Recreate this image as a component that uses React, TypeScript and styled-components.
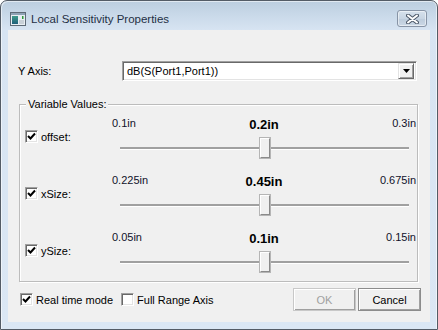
import React from "react";
import styled, { createGlobalStyle } from "styled-components";

const GlobalStyle = createGlobalStyle`
  html, body { margin: 0; padding: 0; background: #fff; }
  body {
    font-family: "Liberation Sans", Arial, sans-serif;
    font-size: 11px;
    color: #000;
  }
  * { box-sizing: border-box; }
`;

type Variable = {
  name: string;
  min: string;
  max: string;
  value: string;
  fraction: number;
};

const variables: Variable[] = [
  { name: "offset:", min: "0.1in", max: "0.3in", value: "0.2in", fraction: 0.5 },
  { name: "xSize:", min: "0.225in", max: "0.675in", value: "0.45in", fraction: 0.5 },
  { name: "ySize:", min: "0.05in", max: "0.15in", value: "0.1in", fraction: 0.5 },
];

const Window = styled.div`
  width: 438px;
  height: 330px;
  border: 1px solid #545c66;
  border-radius: 7px 7px 0 0;
  background: linear-gradient(#bccedf 0px, #c9d9e9 14px, #d7e4f2 29px, #dbe7f4 100%);
  box-shadow: inset 1px 1px 0 rgba(255, 255, 255, 0.55), inset -1px 0 0 rgba(255, 255, 255, 0.55);
  display: flex;
  flex-direction: column;
  overflow: hidden;
`;

const TitleBar = styled.div`
  height: 29px;
  flex-shrink: 0;
  display: flex;
  align-items: center;
  padding: 6px 10px 0 9px;
`;

const TitleText = styled.div`
  flex: 1;
  margin-left: 5px;
  font-size: 11.5px;
  color: #1f2f44;
  white-space: nowrap;
`;

const CloseButton = styled.div`
  align-self: flex-start;
  margin-top: 3px;
  width: 30px;
  height: 17px;
  border: 1px solid #8794a6;
  border-radius: 3px;
  background: linear-gradient(#d6e1ec, #c8d5e3 50%, #bccbdb 51%, #cbd8e6);
  box-shadow: inset 0 0 0 1px rgba(255, 255, 255, 0.5);
  display: flex;
  align-items: center;
  justify-content: center;
`;

const Client = styled.div`
  flex: 1;
  margin: 0 7px 7px 7px;
  background: #f0f0f0;
  display: flex;
  flex-direction: column;
  padding: 31px 9px 0 10px;
`;

const AxisRow = styled.div`
  display: flex;
  align-items: center;
  height: 20px;
`;

const AxisLabel = styled.div`
  width: 104px;
`;

const Combo = styled.div`
  width: 295px;
  height: 20px;
  background: #fff;
  border: 1px solid;
  border-color: #a0a0a0 #fff #fff #a0a0a0;
  box-shadow: inset 1px 1px 0 #696969, inset -1px -1px 0 #e3e3e3;
  display: flex;
  align-items: center;
  padding: 0 2px 0 4px;
`;

const ComboText = styled.div`
  flex: 1;
  color: #000;
`;

const DropButton = styled.div`
  width: 16px;
  height: 16px;
  background: #f0f0f0;
  border: 1px solid;
  border-color: #e3e3e3 #696969 #696969 #e3e3e3;
  box-shadow: inset 1px 1px 0 #fff, inset -1px -1px 0 #a0a0a0;
  display: flex;
  align-items: center;
  justify-content: center;
`;

const GroupBox = styled.div`
  position: relative;
  margin: 23px 0 0 1px;
  width: 399px;
  height: 178px;
  border: 1px solid #bcbcbc;
  box-shadow: inset 1px 1px 0 #fff, 1px 1px 0 #fff;
  padding: 10px 1px 0 5px;
  display: flex;
  flex-direction: column;
  gap: 9px;
`;

const GroupLabel = styled.div`
  position: absolute;
  top: -7px;
  left: 6px;
  padding: 0 2px;
  background: #f0f0f0;
  line-height: 13px;
`;

const VarRow = styled.div`
  display: grid;
  grid-template-columns: 87px 304px;
  height: 48px;
`;

const CheckCell = styled.div`
  display: flex;
  align-items: center;
  align-self: flex-start;
  margin-top: 15px;
  gap: 3px;
`;

const CheckBox = styled.div`
  width: 13px;
  height: 13px;
  flex-shrink: 0;
  background: #fff;
  border: 1px solid;
  border-color: #a0a0a0 #fff #fff #a0a0a0;
  box-shadow: inset 1px 1px 0 #696969, inset -1px -1px 0 #e3e3e3;
  display: flex;
  align-items: center;
  justify-content: center;
`;

const SliderCell = styled.div`
  display: flex;
  flex-direction: column;
`;

const SliderHead = styled.div`
  height: 18px;
  display: grid;
  grid-template-columns: 1fr auto 1fr;
  align-items: center;
`;

const RangeLabel = styled.div<{ $end?: boolean }>`
  justify-self: ${(p) => (p.$end ? "end" : "start")};
  margin-bottom: 3px;
  color: #10102a;
`;

const ValueLabel = styled.div`
  font-size: 13px;
  font-weight: bold;
  color: #000;
`;

const SliderBody = styled.div`
  height: 30px;
  padding: 14px 7px 0 8px;
`;

const Track = styled.div`
  position: relative;
  height: 2px;
  background: #a0a0a0;
  box-shadow: 0 1px 0 #fff;
`;

const Thumb = styled.div`
  position: absolute;
  top: -9px;
  width: 10px;
  height: 20px;
  margin-left: -5px;
  background: #f0f0f0;
  border: 1px solid;
  border-color: #fff #8a8a8a #8a8a8a #fff;
  box-shadow: 0 0 0 1px #b5b5b5;
`;

const BottomRow = styled.div`
  display: flex;
  align-items: center;
  margin-top: 6px;
  padding-left: 2px;
  height: 23px;
`;

const Option = styled.div<{ $gap?: number }>`
  display: flex;
  align-items: center;
  gap: 3px;
  margin-right: ${(p) => p.$gap ?? 0}px;
`;

const Spacer = styled.div`
  flex: 1;
`;

const Button = styled.div<{ $disabled?: boolean }>`
  width: 63px;
  height: 23px;
  margin-left: 2px;
  background: #f0f0f0;
  border: 1px solid;
  border-color: ${(p) => (p.$disabled ? "#d8d8d8 #a0a0a0 #a0a0a0 #d8d8d8" : "#e3e3e3 #696969 #696969 #e3e3e3")};
  box-shadow: inset 1px 1px 0 #fff, inset -1px -1px 0 #a0a0a0;
  outline: 1px solid ${(p) => (p.$disabled ? "#c8c8c8" : "#8c8c8c")};
  outline-offset: -1px;
  color: ${(p) => (p.$disabled ? "#a0a0a0" : "#000")};
  display: flex;
  align-items: center;
  justify-content: center;
`;

const Check = () => (
  <svg width="9" height="9" viewBox="0 0 9 9">
    <polyline points="1,4 3.5,6.5 8,1.5" fill="none" stroke="#000" strokeWidth="2" />
  </svg>
);

const AppIcon = () => (
  <svg width="16" height="14" viewBox="0 0 16 14">
    <defs>
      <linearGradient id="ig" x1="0" y1="0" x2="0" y2="1">
        <stop offset="0" stopColor="#3e9a8a" />
        <stop offset="1" stopColor="#1f5f7a" />
      </linearGradient>
    </defs>
    <rect x="0.5" y="0.5" width="15" height="13" fill="#e8eef3" stroke="#5e6a76" />
    <rect x="1" y="1" width="14" height="2" fill="#8fa3b6" />
    <rect x="2" y="4" width="6" height="8" fill="url(#ig)" />
    <rect x="9" y="8" width="5" height="4" fill="#c9d1d8" />
    <rect x="12" y="4" width="1.5" height="3" fill="#2f9a3a" />
  </svg>
);

const CloseGlyph = () => (
  <svg width="13" height="10" viewBox="0 0 13 10">
    <path d="M2 1.5 L11 8.5 M11 1.5 L2 8.5" stroke="#4f5b6b" strokeWidth="4" strokeLinecap="round" />
    <path d="M2 1.5 L11 8.5 M11 1.5 L2 8.5" stroke="#fff" strokeWidth="2" strokeLinecap="round" />
  </svg>
);

const DownArrow = () => (
  <svg width="7" height="4" viewBox="0 0 7 4">
    <polygon points="0,0 7,0 3.5,4" fill="#000" />
  </svg>
);

export default function App() {
  return (
    <>
      <GlobalStyle />
      <Window>
        <TitleBar>
          <AppIcon />
          <TitleText>Local Sensitivity Properties</TitleText>
          <CloseButton>
            <CloseGlyph />
          </CloseButton>
        </TitleBar>
        <Client>
          <AxisRow>
            <AxisLabel>Y Axis:</AxisLabel>
            <Combo>
              <ComboText>dB(S(Port1,Port1))</ComboText>
              <DropButton>
                <DownArrow />
              </DropButton>
            </Combo>
          </AxisRow>
          <GroupBox>
            <GroupLabel>Variable Values:</GroupLabel>
            {variables.map((v) => (
              <VarRow key={v.name}>
                <CheckCell>
                  <CheckBox>
                    <Check />
                  </CheckBox>
                  <span>{v.name}</span>
                </CheckCell>
                <SliderCell>
                  <SliderHead>
                    <RangeLabel>{v.min}</RangeLabel>
                    <ValueLabel>{v.value}</ValueLabel>
                    <RangeLabel $end>{v.max}</RangeLabel>
                  </SliderHead>
                  <SliderBody>
                    <Track>
                      <Thumb style={{ left: `${v.fraction * 100}%` }} />
                    </Track>
                  </SliderBody>
                </SliderCell>
              </VarRow>
            ))}
          </GroupBox>
          <BottomRow>
            <Option $gap={8}>
              <CheckBox>
                <Check />
              </CheckBox>
              <span>Real time mode</span>
            </Option>
            <Option>
              <CheckBox />
              <span>Full Range Axis</span>
            </Option>
            <Spacer />
            <Button $disabled>OK</Button>
            <Button>Cancel</Button>
          </BottomRow>
        </Client>
      </Window>
    </>
  );
}
